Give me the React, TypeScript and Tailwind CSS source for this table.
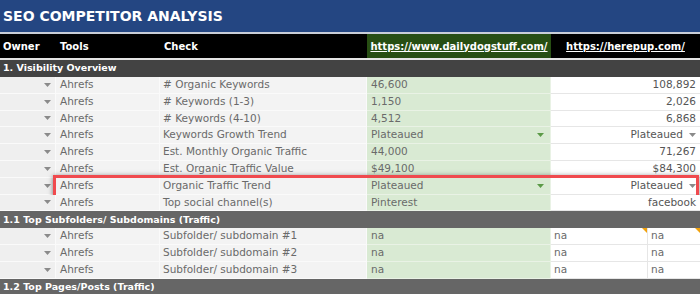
import React from "react";

// ============ SMALL PIECES ============
function Caret({ color = "#8a8a8a" }: { color?: string }) {
  return (
    <svg width="7" height="4" viewBox="0 0 7 4" className="shrink-0">
      <polygon points="0,0 7,0 3.5,4" fill={color} />
    </svg>
  );
}

function CommentMark() {
  return (
    <span className="absolute top-0 right-0 w-0 h-0 border-t-[5px] border-l-[5px] border-t-[#f1a10b] border-l-transparent" />
  );
}

const font = "font-['DejaVu_Sans',sans-serif]";

// ============ ROWS ============
function SectionRow({ label, dark }: { label: string; dark?: boolean }) {
  return (
    <div
      className={`h-[17px] flex items-center px-[3px] text-white font-bold text-[9.5px] ${
        dark ? "bg-[#434343]" : "bg-[#666666]"
      }`}
    >
      {label}
    </div>
  );
}

interface DataRowProps {
  check: string;
  a: string;
  b: string;
  dropdown?: boolean;
  highlight?: boolean;
}

function DataRow({ check, a, b, dropdown, highlight }: DataRowProps) {
  return (
    <div className="relative flex h-[16.8px] text-[10.5px] text-[#6a6a6a]">
      <div className="w-[56px] bg-[#efefef] border-r border-b border-[#fafafa] flex items-center justify-end pr-[4px]">
        <Caret />
      </div>
      <div className="w-[104px] bg-[#f3f3f3] border-r border-b border-[#fafafa] flex items-center pl-[4px]">
        Ahrefs
      </div>
      <div className="w-[207px] bg-[#f3f3f3] border-r border-b border-[#fafafa] flex items-center pl-[3px] whitespace-nowrap">
        {check}
      </div>
      <div className="w-[184px] bg-[#d9ead3] border-r border-b border-[#e9f2e5] flex items-center justify-between pl-[4px] pr-[6px]">
        <span>{a}</span>
        {dropdown && <Caret color="#5b9a47" />}
      </div>
      <div className="w-[149px] bg-white border-b border-[#e6e6e6] flex items-center justify-end gap-[6px] pr-[4px] text-[#555555]">
        <span>{b}</span>
        {dropdown && <Caret />}
      </div>
      {highlight && (
        <div className="absolute left-[53px] right-[1px] top-[-3px] bottom-[-3px] border-[3px] border-[#f04a4e] shadow-[0_1px_5px_rgba(0,0,0,0.5)] pointer-events-none" />
      )}
    </div>
  );
}

function NaRow({ check, marks }: { check: string; marks?: boolean }) {
  return (
    <div className="flex h-[16.8px] text-[10.5px] text-[#6a6a6a]">
      <div className="w-[56px] bg-[#efefef] border-r border-b border-[#fafafa] flex items-center justify-end pr-[4px]">
        <Caret />
      </div>
      <div className="w-[104px] bg-[#f3f3f3] border-r border-b border-[#fafafa] flex items-center pl-[4px]">
        Ahrefs
      </div>
      <div className="w-[207px] bg-[#f3f3f3] border-r border-b border-[#fafafa] flex items-center pl-[3px]">
        {check}
      </div>
      <div className="w-[184px] bg-[#d9ead3] border-r border-b border-[#e9f2e5] flex items-center pl-[4px]">
        na
      </div>
      <div className="relative w-[97px] bg-white border-r border-b border-[#e6e6e6] flex items-center pl-[3px]">
        na
        {marks && <CommentMark />}
      </div>
      <div className="relative w-[52px] bg-white border-b border-[#e6e6e6] flex items-center pl-[3px]">
        na
        {marks && <CommentMark />}
      </div>
    </div>
  );
}

// ============ DATA ============
const visibility: DataRowProps[] = [
  { check: "# Organic Keywords", a: "46,600", b: "108,892" },
  { check: "# Keywords (1-3)", a: "1,150", b: "2,026" },
  { check: "# Keywords (4-10)", a: "4,512", b: "6,868" },
  { check: "Keywords Growth Trend", a: "Plateaued", b: "Plateaued", dropdown: true },
  { check: "Est. Monthly Organic Traffic", a: "44,000", b: "71,267" },
  { check: "Est. Organic Traffic Value", a: "$49,100", b: "$84,300" },
  { check: "Organic Traffic Trend", a: "Plateaued", b: "Plateaued", dropdown: true, highlight: true },
  { check: "Top social channel(s)", a: "Pinterest", b: "facebook" },
];

// ============ PAGE ============
export default function App() {
  return (
    <div className={`w-[700px] h-[294px] overflow-hidden bg-white ${font}`}>
      {/* Title */}
      <div className="h-[32px] bg-[#244682] flex items-center px-[3px] text-white font-bold text-[14px]">
        SEO COMPETITOR ANALYSIS
      </div>
      <div className="h-[2px] bg-[#c9ced8]" />

      {/* Header */}
      <div className="flex h-[24px] bg-black text-white font-bold text-[10px]">
        <div className="w-[56px] flex items-center pl-[3px]">Owner</div>
        <div className="w-[104px] flex items-center pl-[4px]">Tools</div>
        <div className="w-[207px] flex items-center pl-[4px]">Check</div>
        <div className="w-[184px] bg-[#274e13] flex items-center justify-center underline">
          https://www.dailydogstuff.com/
        </div>
        <div className="w-[149px] flex items-center justify-center underline">
          https://herepup.com/
        </div>
      </div>
      <div className="h-[2px] bg-[#e4e4e4]" />

      <SectionRow label="1. Visibility Overview" dark />
      {visibility.map((r) => (
        <DataRow key={r.check} {...r} />
      ))}

      <SectionRow label="1.1 Top Subfolders/ Subdomains (Traffic)" />
      <NaRow check="Subfolder/ subdomain #1" marks />
      <NaRow check="Subfolder/ subdomain #2" />
      <NaRow check="Subfolder/ subdomain #3" />

      <SectionRow label="1.2 Top Pages/Posts (Traffic)" />
    </div>
  );
}
